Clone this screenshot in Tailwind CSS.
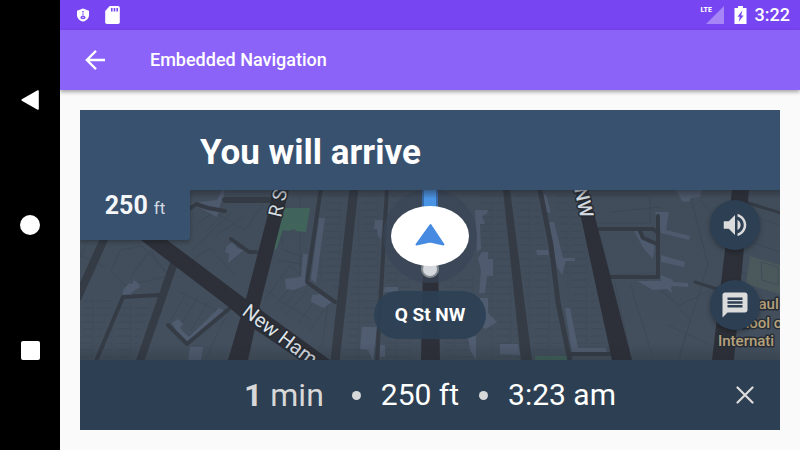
<!DOCTYPE html>
<html lang="en">
<head>
<meta charset="utf-8">
<meta name="viewport" content="width=device-width, initial-scale=1">
<title>Embedded Navigation</title>
<script src="https://cdn.jsdelivr.net/npm/@tailwindcss/browser@4"></script>
</head>
<body class="flex min-h-screen bg-[#fafafa] font-[Roboto,sans-serif] text-white">

<nav aria-label="System" class="flex w-15 shrink-0 flex-col items-center justify-center gap-[105px] bg-black">
  <button aria-label="Back" class="size-5"><svg class="size-5" viewBox="0 0 20 20"><path d="M2.2 10 18 1v18Z" fill="#fff" stroke="#fff" stroke-width="1.6" stroke-linejoin="round"/></svg></button>
  <button aria-label="Home" class="size-5 rounded-full bg-white"></button>
  <button aria-label="Recent apps" class="flex size-5 items-center justify-center"><span class="size-[19px] rounded-[2px] bg-white"></span></button>
</nav>

<div class="flex min-w-0 flex-1 flex-col">
  <div class="flex h-[30px] items-center bg-[#7745f1] pr-[10px] pl-4">
    <svg class="h-[14px] w-[14px]" viewBox="0 0 14 14"><path d="M7 .4 13 2.800v4.100c0 3.200-2.500 5.600-6 6.700C3.500 12.500 1 10.100 1 6.900V2.800Z" fill="#fff"/><path d="M6.300 3h1.400v1.500H6.300zM6.500 5.300h1v2.400h-1z" fill="#7745f1"/><ellipse cx="7" cy="9.500" rx="2.600" ry="1.700" fill="#7745f1"/><circle cx="7" cy="9.500" r=".7" fill="#fff"/></svg>
    <svg class="ml-[15px] h-[18px] w-[15px]" viewBox="0 0 15 18"><path d="M4.700 0H13a1.800 1.800 0 0 1 1.800 1.800v14.400A1.800 1.800 0 0 1 13 18H2a1.800 1.800 0 0 1-1.800-1.800V5Z" fill="#fff"/><path d="M6 2h1.600v3.500H6zM8.700 2h1.600v3.500H8.700zM11.400 2H13v3.500h-1.600z" fill="#7745f1"/></svg>
    <div class="ml-auto flex items-center">
      <span class="relative flex h-[18px] w-[23px] justify-end">
        <svg class="h-[18px] w-[18px]" viewBox="0 0 18 18"><path d="M18 0v18H0Z" fill="#a686f6"/></svg>
        <span class="absolute top-0 left-0 font-['Liberation_Sans_Narrow','Roboto_Condensed',Roboto,sans-serif] text-[8px] leading-[8px] font-bold">LTE</span>
      </span>
      <svg class="ml-[10px] h-[18px] w-[13px]" viewBox="0 0 13 18"><path d="M4 0h5v2h3.500v16H.5V2H4Z" fill="#fff"/><path d="M8.300 4.500 3.500 10.700h2.300L4.800 15.800l4.800-6.400H7.200Z" fill="#7745f1"/></svg>
      <span class="ml-2 text-[18px] leading-[30px] font-medium">3:22</span>
    </div>
  </div>

  <header class="flex h-15 items-center bg-[#8c63f9] pl-[25px] shadow-[0_2px_4px_rgba(0,0,0,0.35)]">
    <a href="#" aria-label="Navigate up" class="block"><svg class="size-5" viewBox="0 0 20 20" fill="none" stroke="#fff" stroke-width="2.300"><path d="M20 10H2M11 .9 1.800 10 11 19.100"/></svg></a>
    <h1 class="ml-[45px] text-[18px] leading-6 font-medium">Embedded Navigation</h1>
  </header>

  <main class="flex flex-1 flex-col p-5">
    <div class="flex h-20 shrink-0 items-center bg-[#38516f] pl-30">
      <h2 class="pt-1.5 text-[35px] leading-10 font-bold">You will arrive</h2>
    </div>

    <section aria-label="Map" class="relative min-h-[170px] flex-1 overflow-hidden bg-[#434f5d]">
      <svg class="absolute inset-0 h-full w-full" viewBox="80 190 700 170" preserveAspectRatio="xMidYMid slice">
        <defs>
          <pattern id="lots" width="19" height="7" patternUnits="userSpaceOnUse"><path d="M0 .5h17v6H3" fill="none" stroke="#3e4957" stroke-width=".6"/></pattern>
          <linearGradient id="shade" x1="0" y1="0" x2="0" y2="1"><stop offset="0" stop-color="#20242c" stop-opacity=".5"/><stop offset=".05" stop-color="#20242c" stop-opacity=".06"/><stop offset=".9" stop-color="#20242c" stop-opacity="0"/><stop offset="1" stop-color="#20242c" stop-opacity=".22"/></linearGradient>
        </defs>
        <rect x="80" y="190" width="700" height="170" fill="#434f5d"/>
        <!-- parcel lines -->
        <g fill="url(#lots)">
          <path d="M84 300h30l-22 60H80zM122 302h30l-20 58h-30zM360 195h22l-5 165h-33zM326 195h20l-6 95-23-9zM391 195h20v165h-29zM445 275h30v85h-30zM478 195h24l20 165h-32zM515 195h22l28 165h-32zM556 195h18l32 155h-32z"/>
        </g>
        <g fill="none" stroke="#3d4856" stroke-width=".8">
          <path d="M80 255l25 12M88 240l-8 18M120 250l22-4 28 30-45 10-14-15zM130 278l18-25M150 250l15 22M192 250l40-38M196 225l30-22M205 232l20-20M215 236l30-20M210 210l35 20 18-26M188 290l-17 30M198 296l-17 29M208 302l-17 29M218 308l-15 24M180 292l44 22M190 262l20-14 24 26M225 318l-20 42M265 300l25-35 38 38-6 44M275 305l20-22M286 315l22-25M298 324l20-28M310 330l14-20M265 290l20 14 25 15M282 215v30M300 195v80M284 250l22 8M277 260l30 5M297 290l-16 20"/>
          <path d="M590 195h60v28h-53M600 235l10 40 45-2M615 283l16 75M630 283l22 72M690 195l18 70-30 94M662 290l28 30-10 38M610 212l50-5M645 280l35 25 30-15M750 215l30 10M745 240l35 12M738 270l42 20M700 200l25 30M668 325l42 20"/>
        </g>
        <!-- buildings -->
        <g fill="#505c70">
          <path d="M123 290l6-7 3 1 2-4 5 4 1 3-9 6 2 3-10-1zM190 203l27-3 5-10h3l-1 3v8l-3 1-4 15-15-8zM227 246l6-4 4 6 7 2-16 13 1-9-4-2zM172 323l6-4 5 5-3 4 9 9 30-29 6 3-37 31-7-2zM190 347h13l-2 13h-13z"/>
          <path d="M319 218l6 0-9 65-5-4zM303 254h5l-3 24 4 6-15 6-8-1-1-10 16-2zM312 295l8-1 12 8-8 6-13-6zM375 220h8l-2 19-3-3-1-7h-3zM385 287h13v5h-15zM362 327h15l-4 34-5-11-8-1zM380 345h5v12h-5z"/>
          <path d="M475 210h13l-1 4-5 2 3 8h-5l1 25-4 3zM482 252h6v7h5v17h-6l-2 17h-6l2-22-3-13zM480 298h8v15l9 9-11 7-4-2zM500 344h18l2 11-20-1zM468 337l8-1v24l-6-10zM536 250h12l1 5h-12zM542 194h4l5 19-6-1zM548 222h6l9 36h12v3h-9l-4 14-5-8z"/>
          <path d="M565 308h5l8 40h27l2 4h-35zM634 231h4l5 8 12 4-2 16-9-10zM676 190h26l-2 7-9 1-2 4-7-1zM655 212h14l-3 18 24 6-1 4-28-7zM661 255l24 7-1 5-23-5zM637 281h22l29 2v4l-17-1 1 7-5-4-14 1zM661 275l12 5-2 9-10-5z"/>
        </g>
        <path d="M283 208l27 0-4 24-10-1-1-2-7 2-5-1-7 20-3-2z" fill="#42675d"/>
        <path d="M535 356h34v4h-34z" fill="#3f6259"/>
        <path d="M750 256l30 9v29l-34-10z" fill="#4d5a5d"/>
        <path d="M761 262l17 5v18l-16-5z" fill="none" stroke="#424e59"/>
        <!-- minor streets -->
        <g fill="none" stroke="#353c46" stroke-linecap="round" stroke-linejoin="round">
          <path d="M105 237 78 297M174 263l-34 98" stroke-width="8"/>
          <path d="M354 188l-19 173" stroke-width="9"/>
          <path d="M503 190h7l22 170h-11z" fill="#353c46" stroke="none"/>
          <path d="M387 188l-10 173M321 188l-14 94 28 20M160 295l-37 2-27 64M168 325l19 19 43-36M188 210l8-6 12 4 17 3M231 239l18 13h7M598 229h55l5 4M610 277h48M658 216v61M640 231l3 7 14 6M570 354h42" stroke-width="4"/>
          <path d="M225 200h49" stroke-width="6"/>
          <path d="M540 190l11 55 7 57 12 59" stroke-width="5"/>
          <path d="M748 203l33 10M695 282l28 9" stroke-width="3"/>
        </g>
        <!-- major streets -->
        <g fill="#2d3038">
          <path d="M141 240h26l76 57 87 63h-30l-47-32-23-20z"/>
          <path d="M273 190h16l-7 28-22 87-12 55h-20l19-65 20-77z"/>
          <path d="M423 265h15l2 95h-19zM575 190h13l44 170h-20zM732 190h17l-15 170h-22z"/>
        </g>
        <!-- route line -->
        <circle cx="430" cy="236" r="47" fill="#3a4659" opacity=".65"/>
        <path d="M422 190h16v30h-16z" fill="#376fb3"/><path d="M424 190h12v30h-12z" fill="#4d9bf0"/>
        <!-- labels -->
        <g fill="#dfe3ea" stroke="#262a32" stroke-width="3" stroke-linejoin="round" paint-order="stroke" font-family="Roboto, sans-serif">
          <text transform="translate(241 314) rotate(37)" font-size="20">New Ham</text>
          <text transform="translate(281 218) rotate(-77)" font-size="19">R St</text>
          <text transform="translate(574 189) rotate(77)" font-size="19" font-weight="500">NW</text>
        </g>
        <g fill="#b7a37c" stroke="#272d36" stroke-width="3" stroke-linejoin="round" paint-order="stroke" font-family="Roboto, sans-serif" font-size="15" font-weight="500">
          <text x="749" y="309">Paul</text>
          <text x="724" y="328">School o</text>
          <text x="718" y="346">Internati</text>
        </g>
        <rect x="80" y="190" width="700" height="170" fill="url(#shade)"/>
        <!-- position marker -->
        <circle cx="430" cy="269" r="9" fill="#858b92"/><circle cx="430" cy="269" r="7" fill="#d5d9dd"/>
        <ellipse cx="430" cy="236" rx="39" ry="30" fill="#fff"/>
        <path d="M430.500 225 443.500 244.500 430 241.500 416.500 244.500Z" fill="#468be1" stroke="#468be1" stroke-width="2" stroke-linejoin="round"/>
      </svg>

      <p class="absolute top-0 left-0 flex h-[50px] w-[110px] items-baseline justify-center gap-[6px] rounded-br-[3px] bg-[#38516f] text-[#f4f6f8] shadow-[0_2px_4px_rgba(0,0,0,0.25)] [clip-path:inset(0_-6px_-6px_0)]"><span class="text-[25px] leading-8 font-bold">250</span><span class="text-[17px] text-[#d3dae2]">ft</span></p>

      <p class="absolute bottom-[21px] left-1/2 flex h-12 w-28 -translate-x-1/2 items-center justify-center rounded-full bg-[#2d4055]/92 text-[19px] font-bold">Q St NW</p>

      <div class="absolute top-[10px] right-5 flex flex-col gap-[30px]">
        <button aria-label="Mute" class="flex size-[50px] items-center justify-center rounded-full bg-[#2d3f53] shadow-[0_2px_5px_rgba(0,0,0,0.3)]">
          <svg class="size-[30px]" viewBox="0 0 24 24" fill="#dcdcdc"><path d="M3 9v6h4l5 5V4L7 9H3zm13.500 3c0-1.770-1.020-3.290-2.500-4.030v8.050c1.480-.730 2.500-2.250 2.500-4.020zM14 3.230v2.060c2.890.860 5 3.540 5 6.710s-2.110 5.850-5 6.710v2.060c4.010-.910 7-4.490 7-8.770s-2.990-7.860-7-8.770z"/></svg>
        </button>
        <button aria-label="Send feedback" class="flex size-[50px] items-center justify-center rounded-full bg-[#2d3f53] shadow-[0_2px_5px_rgba(0,0,0,0.3)]">
          <svg class="size-[30px]" viewBox="0 0 24 24" fill="#dcdcdc"><path d="M20 2H4c-1.100 0-2 .9-2 2v18l4-4h14c1.100 0 2-.9 2-2V4c0-1.100-.9-2-2-2zM6 6h12v2H6zm0 3h12v2H6zm0 3h12v2H6z" fill-rule="evenodd"/></svg>
        </button>
      </div>
    </section>

    <footer class="grid h-[70px] shrink-0 grid-cols-[70px_1fr_70px] items-center bg-[#2d3f53]">
      <p class="col-start-2 flex items-center justify-center gap-5 text-[30px] leading-10 whitespace-nowrap">
        <span class="mr-2 text-[32px] text-[#d8d8d8]"><b>1</b> min</span>
        <span class="size-[9px] rounded-full bg-[#d8d8d8]"></span>
        <span>250 ft</span>
        <span class="size-[9px] rounded-full bg-[#d8d8d8]"></span>
        <span>3:23 am</span>
      </p>
      <button aria-label="End navigation" class="flex size-10 items-center justify-center justify-self-center"><svg class="size-[18px]" viewBox="0 0 18 18" fill="none" stroke="#dcdcdc" stroke-width="2.200" stroke-linecap="round"><path d="M1.500 1.500l15 15M16.500 1.500l-15 15"/></svg></button>
    </footer>
  </main>
</div>
</body>
</html>
